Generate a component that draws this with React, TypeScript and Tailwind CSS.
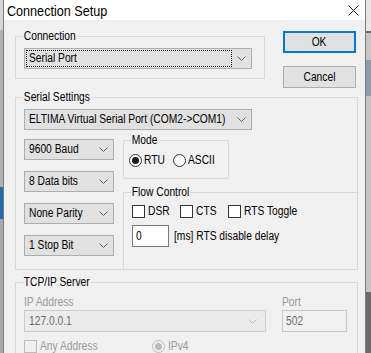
import React from "react";

function T({ children, className = "" }: { children: React.ReactNode; className?: string }) {
  return (
    <span className={`inline-block origin-left scale-x-[0.82] whitespace-nowrap leading-none ${className}`}>
      {children}
    </span>
  );
}

function Chevron({ color = "#606060" }: { color?: string }) {
  return (
    <svg width="9" height="5" viewBox="0 0 9 5" fill="none">
      <polyline points="0.5,0.5 4.5,4.5 8.5,0.5" stroke={color} strokeWidth="1" />
    </svg>
  );
}

function Combo({
  text,
  className,
  focus = false,
}: {
  text: string;
  className: string;
  focus?: boolean;
}) {
  return (
    <div className={`flex h-[21px] border border-[#adadad] bg-[#e1e1e1] text-black ${className}`}>
      {focus ? (
        <div className="m-[1px] mr-0 flex flex-1 items-center overflow-hidden border border-dotted border-black pl-[2px]">
          <T>{text}</T>
        </div>
      ) : (
        <div className="flex flex-1 items-center overflow-hidden pl-[4px]">
          <T>{text}</T>
        </div>
      )}
      <div className="flex w-[19px] items-center justify-center">
        <Chevron />
      </div>
    </div>
  );
}

function Group({
  label,
  className,
  children,
}: {
  label: string;
  className: string;
  children?: React.ReactNode;
}) {
  return (
    <div className={`relative border-[#d9d9d9] ${className}`}>
      <span className="absolute left-[7px] top-[-8px] inline-block origin-left scale-x-[0.82] whitespace-nowrap bg-[#f0f0f0] px-[1px] leading-[14px] text-black">
        {label}
      </span>
      {children}
    </div>
  );
}

function Radio({ checked, disabled = false }: { checked: boolean; disabled?: boolean }) {
  return (
    <div
      className={`flex h-[13px] w-[13px] shrink-0 items-center justify-center rounded-full border ${
        disabled ? "border-[#bcbcbc] bg-[#f0f0f0]" : "border-[#333333] bg-white"
      }`}
    >
      {checked && <div className={`h-[7px] w-[7px] rounded-full ${disabled ? "bg-[#bcbcbc]" : "bg-[#1a1a1a]"}`} />}
    </div>
  );
}

function Check({ disabled = false }: { disabled?: boolean }) {
  return (
    <div
      className={`h-[13px] w-[13px] shrink-0 border ${
        disabled ? "border-[#bcbcbc] bg-[#f0f0f0]" : "border-[#333333] bg-white"
      }`}
    />
  );
}

export default function App() {
  return (
    <div className="flex h-[353px] w-[371px] overflow-hidden font-['Liberation_Sans',Arial,sans-serif] text-[12.5px] text-black">
      {/* left backdrop */}
      <div className="flex w-[3px] flex-col">
        <div className="h-[30px] bg-[#d6d6d6]" />
        <div className="h-[157px] bg-[#b0b0b0]" />
        <div className="h-[32px] bg-[#1f6bb0]" />
        <div className="flex-1 bg-[#a8a8a8]" />
      </div>

      {/* window */}
      <div className="flex w-[363px] flex-col border-x border-[#7c7c7c] bg-[#f0f0f0]">
        {/* title bar */}
        <div className="flex h-[27px] items-center justify-between bg-white pl-[3px] pr-[5px]">
          <span className="inline-block origin-left scale-x-[0.84] whitespace-nowrap text-[15px] leading-none">
            Connection Setup
          </span>
          <svg width="11" height="11" viewBox="0 0 11 11" className="mr-[1px]">
            <path d="M0.5 0.5 L10.5 10.5 M10.5 0.5 L0.5 10.5" stroke="#222222" strokeWidth="1" />
          </svg>
        </div>

        {/* body */}
        <div className="flex flex-1 flex-col pl-[11px]">
          {/* row 1 */}
          <div className="flex items-start">
            <Group label="Connection" className="mt-[16px] h-[43px] w-[250px] border pl-[8px] pt-[11px]">
              <Combo text="Serial Port" className="w-[228px]" focus />
            </Group>
            <div className="ml-[18px] mt-[11px] flex flex-col gap-[13px]">
              <div className="flex h-[22px] w-[73px] items-center justify-center border-2 border-[#0078d7] bg-[#e1e1e1]">
                <span className="inline-block scale-x-[0.82] leading-none">OK</span>
              </div>
              <div className="flex h-[22px] w-[73px] items-center justify-center border border-[#adadad] bg-[#e1e1e1]">
                <span className="inline-block scale-x-[0.82] leading-none">Cancel</span>
              </div>
            </div>
          </div>

          {/* serial settings */}
          <Group label="Serial Settings" className="mt-[9px] flex h-[173px] w-[343px] flex-col border">
            <div className="ml-[8px] mt-[11px]">
              <Combo text="ELTIMA Virtual Serial Port (COM2->COM1)" className="w-[228px]" />
            </div>
            <div className="mt-[9px] flex flex-1">
              <div className="ml-[8px] flex flex-col gap-[11px]">
                <Combo text="9600 Baud" className="w-[90px]" />
                <Combo text="8 Data bits" className="w-[90px]" />
                <Combo text="None Parity" className="w-[90px]" />
                <Combo text="1 Stop Bit" className="w-[90px]" />
              </div>
              <div className="ml-[9px] flex flex-1 flex-col">
                <Group label="Mode" className="mt-[1px] h-[39px] w-[106px] border pl-[5px] pt-[13px]">
                  <div className="flex h-[13px] items-center">
                    <div className="flex w-[44px] items-center">
                      <Radio checked />
                      <T className="ml-[2px]">RTU</T>
                    </div>
                    <div className="flex items-center">
                      <Radio checked={false} />
                      <T className="ml-[2px]">ASCII</T>
                    </div>
                  </div>
                </Group>
                <Group label="Flow Control" className="mt-[13px] flex-1 border-l border-t pl-[8px] pt-[12px]">
                  <div className="flex h-[13px] items-center">
                    <div className="flex w-[48px] items-center">
                      <Check />
                      <T className="ml-[3px]">DSR</T>
                    </div>
                    <div className="flex w-[48px] items-center">
                      <Check />
                      <T className="ml-[3px]">CTS</T>
                    </div>
                    <div className="flex items-center">
                      <Check />
                      <T className="ml-[3px]">RTS Toggle</T>
                    </div>
                  </div>
                  <div className="mt-[7px] flex items-center">
                    <div className="h-[22px] w-[37px] border border-[#7a7a7a] bg-white pl-[3px] pt-[3px] leading-[14px]">
                      <span className="inline-block origin-left scale-x-[0.82]">0</span>
                    </div>
                    <T className="ml-[5px]">[ms] RTS disable delay</T>
                  </div>
                </Group>
              </div>
            </div>
          </Group>

          {/* tcp/ip server */}
          <Group label="TCP/IP Server" className="mt-[12px] w-[343px] flex-1 border-x border-t pl-[8px] pt-[12px]">
            <div className="flex">
              <div className="flex flex-col">
                <span className="inline-block h-[14px] origin-left scale-x-[0.82] whitespace-nowrap leading-[14px] text-[#9a9a9a]">
                  IP Address
                </span>
                <div className="mt-[1px] flex h-[22px] w-[242px] border border-[#cccccc] bg-[#ebebeb] text-[#6d6d6d]">
                  <div className="flex flex-1 items-center pl-[4px]">
                    <T>127.0.0.1</T>
                  </div>
                  <div className="flex w-[26px] items-center justify-center">
                    <Chevron color="#bdbdbd" />
                  </div>
                </div>
              </div>
              <div className="ml-[16px] flex flex-col">
                <span className="inline-block h-[14px] origin-left scale-x-[0.82] whitespace-nowrap leading-[14px] text-[#9a9a9a]">
                  Port
                </span>
                <div className="mt-[1px] flex h-[22px] w-[65px] items-center border border-[#c8c8c8] bg-[#f0f0f0] pl-[3px] text-[#6d6d6d]">
                  <T>502</T>
                </div>
              </div>
            </div>
            <div className="mt-[8px] flex items-center">
              <div className="flex w-[128px] items-center">
                <Check disabled />
                <T className="ml-[3px] text-[#9a9a9a]">Any Address</T>
              </div>
              <div className="flex items-center">
                <Radio checked disabled />
                <T className="ml-[3px] text-[#9a9a9a]">IPv4</T>
              </div>
            </div>
          </Group>
        </div>
      </div>

      {/* right backdrop */}
      <div className="flex w-[5px] flex-col">
        <div className="h-[31px] bg-[#e6e6e6]" />
        <div className="h-[2px] bg-[#6c6c6c]" />
        <div className="h-[27px] bg-[#c6c6c6]" />
        <div className="h-[36px] bg-[#8d9cab]" />
        <div className="h-[196px] bg-[#c4c4c4]" />
        <div className="flex-1 bg-[#6b6b6b]" />
      </div>
    </div>
  );
}
